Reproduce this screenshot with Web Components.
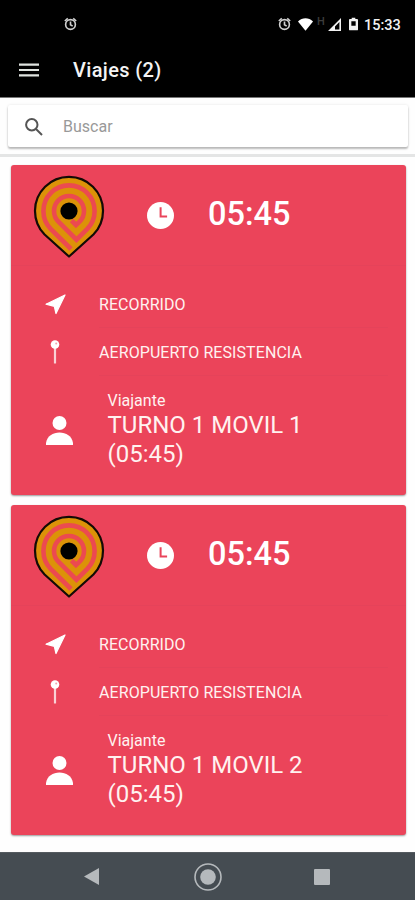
<!DOCTYPE html>
<html lang="es">
<head>
<meta charset="utf-8">
<title>Viajes</title>
<style>
  body {
    margin: 0;
    background: #fefefe;
    font-family: Roboto, "Liberation Sans", sans-serif;
    overflow: hidden;
  }
</style>
</head>
<body>
<viajes-app></viajes-app>

<script>
// Creates a template from a html string.
const createTemplate = (html) => {
  const template = document.createElement('template')
  template.innerHTML = html
  return template
}

// Base class, clones the template of the subclass into the shadow root.
class BaseElement extends HTMLElement {
  constructor() {
    super()
    this.attachShadow({ mode: 'open' }).appendChild(this.constructor.template.content.cloneNode(true))
  }
}

const icons = {
  alarm: '<svg viewBox="0 0 24 24"><g fill="none" stroke="currentColor" stroke-width="3"><circle cx="12" cy="13" r="9"/><path d="M12 7.500v6l4 2.500M1.500 6.500l5.500-5M22.500 6.500l-5.500-5"/></g></svg>',
  wifi: '<svg viewBox="0 0 24 20"><path fill="currentColor" d="M12 20 0 5C7-1.500 17-1.500 24 5z"/></svg>',
  signal: '<svg viewBox="0 0 13 13"><path fill="currentColor" fill-rule="evenodd" d="M13 0v13H0zM11.400 4 7 8.400v3h4.400z"/></svg>',
  battery: '<svg viewBox="0 0 10 14"><path fill="currentColor" fill-rule="evenodd" d="M3 0h4v1.500h2q1 0 1 1V13q0 1-1 1H1q-1 0-1-1V2.500q0-1 1-1h2zM2.600 4v5h4.800V4z"/></svg>',
  menu: '<svg viewBox="0 0 20 14"><path stroke="currentColor" stroke-width="2.200" d="M0 1.600h20M0 7h20M0 12.400h20"/></svg>',
  search: '<svg viewBox="0 0 18 18"><g fill="none" stroke="currentColor" stroke-width="2"><circle cx="6.800" cy="6.800" r="5.700"/><path d="m11 11 6 6"/></g></svg>',
  clock: '<svg viewBox="0 0 27 27"><circle cx="13.500" cy="13.500" r="13.500" fill="currentColor"/><path d="M13.600 5.200v9.300h6.500" fill="none" stroke="#e9445b" stroke-width="2"/></svg>',
  arrow: '<svg viewBox="0 0 21 21"><path fill="currentColor" stroke="currentColor" stroke-width="1.200" stroke-linejoin="round" d="M20 1 11 19.500 9.300 12.300 1 10.200z"/></svg>',
  pin: '<svg viewBox="0 0 10 24"><path d="M5 7v16.500" stroke="currentColor" stroke-width="2.200" opacity=".75"/><circle cx="5" cy="4.500" r="4.300" fill="currentColor"/><circle cx="6.200" cy="3.500" r="1" fill="#e9445b" opacity=".5"/></svg>',
  person: '<svg viewBox="0 0 27 29"><g fill="currentColor"><circle cx="13.500" cy="7" r="7"/><path d="M0 29v-2C1 20 7 16.500 13.500 16.500S26 20 27 27v2z"/></g></svg>',
  back: '<svg viewBox="0 0 15 17"><path fill="currentColor" d="M15 0v17L0 8.500z"/></svg>',
  home: '<svg viewBox="0 0 28 28"><circle cx="14" cy="14" r="13" fill="none" stroke="currentColor" stroke-width="1.600"/><circle cx="14" cy="14" r="7.800" fill="currentColor"/></svg>',
  recent: '<svg viewBox="0 0 16 16"><rect width="16" height="16" rx="1" fill="currentColor"/></svg>',
  logo: `<svg viewBox="-36 -36 72 84">
    <path d="M0 45.500-24.400 23.500A34 34 0 1 1 24.400 23.500z" fill="#dc9208" stroke="#130b05" stroke-width="2.200" stroke-linejoin="round"/>
    <path d="M2 38-18.100 18.100A25.600 25.600 0 1 1 18.100 18.100L7.500 28.700-10.600 10.600A15 15 0 1 1 10.600 10.600L7 14 2.500 9.500" fill="none" stroke="#ec4a50" stroke-width="4.600"/>
    <circle r="8.600" fill="#000"/>
  </svg>`
}

// <app-icon name="..."> the size comes from the width/height of the host.
class AppIcon extends BaseElement {
  static template = createTemplate(`
    <style>
      :host { display: block; flex: none; }
      svg { display: block; width: 100%; height: 100%; }
    </style>
    <div id="icon" style="height: 100%"></div>
  `)

  connectedCallback() {
    this.shadowRoot.querySelector('#icon').innerHTML = icons[this.getAttribute('name')]
  }
}
customElements.define('app-icon', AppIcon)

class StatusBar extends BaseElement {
  static template = createTemplate(`
    <style>
      :host {
        display: flex;
        align-items: center;
        height: 48px;
        padding: 0 15px 0 64px;
        box-sizing: border-box;
        background: #000;
        color: #f2f2f2;
      }
      .alarm { width: 13px; height: 14px; color: #d0d0d0; }
      .right { display: flex; align-items: center; margin-left: auto; }
      .wifi { width: 15px; height: 13px; margin-left: 7px; color: #fff; }
      .net { font-size: 11px; line-height: 10px; font-weight: 500; color: #3c3c3c; margin: -5px 3px 0 4px; width: 8px; }
      .signal { width: 13px; height: 13px; margin-top: 1px; }
      .battery { width: 9px; height: 14px; margin: 0 6px 0 8px; }
      .time { font-size: 14.500px; font-weight: 500; width: 36px; margin-top: 2px; white-space: nowrap; }
    </style>
    <app-icon class="alarm" name="alarm"></app-icon>
    <div class="right">
      <app-icon class="alarm" name="alarm"></app-icon>
      <app-icon class="wifi" name="wifi"></app-icon>
      <span class="net">H</span>
      <app-icon class="signal" name="signal"></app-icon>
      <app-icon class="battery" name="battery"></app-icon>
      <span class="time"><slot></slot></span>
    </div>
  `)
}
customElements.define('status-bar', StatusBar)

class AppHeader extends BaseElement {
  static template = createTemplate(`
    <style>
      :host {
        display: flex;
        align-items: center;
        height: 50px;
        padding: 0 19px 6px;
        box-sizing: border-box;
        background: #000;
        border-bottom: 1px solid #777;
        color: #f4f4f4;
      }
      app-icon { width: 20px; height: 14px; color: #dfe3df; }
      h1 { margin: 0 0 0 34px; font-size: 20px; font-weight: 500; line-height: 24px; letter-spacing: .34px; }
    </style>
    <app-icon name="menu"></app-icon>
    <h1><slot></slot></h1>
  `)
}
customElements.define('app-header', AppHeader)

class SearchBar extends BaseElement {
  static template = createTemplate(`
    <style>
      :host {
        display: block;
        height: 59px;
        padding: 7px 7px 0 8px;
        box-sizing: border-box;
        border-bottom: 3px solid #e4e5e5;
      }
      .box {
        display: flex;
        align-items: center;
        height: 42px;
        padding-left: 17px;
        border-radius: 2px;
        background: #fff;
        box-shadow: 0 2px 2px rgba(0, 0, 0, .25), 0 0 3px rgba(0, 0, 0, .1);
      }
      app-icon { width: 18px; height: 18px; margin-top: 1px; color: #555; }
      span { margin-left: 20px; font-size: 16px; color: #999; }
    </style>
    <div class="box">
      <app-icon name="search"></app-icon>
      <span><slot></slot></span>
    </div>
  `)
}
customElements.define('search-bar', SearchBar)

// Red card for one trip.
class TripCard extends BaseElement {
  static template = createTemplate(`
    <style>
      :host {
        display: block;
        height: 330px;
        border-radius: 3px;
        background: #eb445a;
        color: #fff2f0;
        box-shadow: 0 1px 2px rgba(0, 0, 0, .4);
      }
      .head {
        display: flex;
        align-items: center;
        height: 100px;
        padding-left: 22px;
        border-bottom: 1px solid #e5435a;
        margin-bottom: 14px;
      }
      .logo { width: 72px; height: 84px; margin-top: 3px; }
      .clock { width: 27px; height: 27px; margin-left: 42px; color: #fff; }
      .time { margin: -2px 0 0 34px; font-size: 32.500px; line-height: 38px; font-weight: 500; color: #fff; }
      .row { display: flex; align-items: center; height: 48px; }
      .row .cell { width: 88px; flex: none; }
      .row .label {
        flex: 1;
        height: 48px;
        line-height: 49px;
        margin-right: 18px;
        box-sizing: border-box;
        border-bottom: 1px solid #e5435a;
        font-size: 16px;
        letter-spacing: .08px;
      }
      .arrow { width: 21px; height: 21px; margin-left: 34px; color: #fff; }
      .pin { width: 10px; height: 24px; margin-left: 39px; color: #fff; }
      .traveller { display: flex; align-items: center; padding: 15px 0 0 35px; }
      .person { width: 27px; height: 29px; color: #fff; }
      .info { margin-left: 34.500px; width: 230px; }
      .small { font-size: 16px; line-height: 19px; }
      .name { font-size: 24px; line-height: 29px; padding-top: 1px; }
    </style>
    <div class="head">
      <app-icon class="logo" name="logo"></app-icon>
      <app-icon class="clock" name="clock"></app-icon>
      <span class="time"><slot name="time"></slot></span>
    </div>
    <div class="row">
      <div class="cell"><app-icon class="arrow" name="arrow"></app-icon></div>
      <div class="label">RECORRIDO</div>
    </div>
    <div class="row">
      <div class="cell"><app-icon class="pin" name="pin"></app-icon></div>
      <div class="label"><slot name="place"></slot></div>
    </div>
    <div class="traveller">
      <app-icon class="person" name="person"></app-icon>
      <div class="info">
        <div class="small">Viajante</div>
        <div class="name"><slot></slot></div>
      </div>
    </div>
  `)
}
customElements.define('trip-card', TripCard)

class NavBar extends BaseElement {
  static template = createTemplate(`
    <style>
      :host {
        display: flex;
        align-items: center;
        height: 48px;
        padding-left: 84px;
        box-sizing: border-box;
        background: #454c52;
        border-top: 1px solid #555b60;
        color: #b5b9bc;
      }
      .back { width: 15px; height: 17px; }
      .home { width: 28px; height: 28px; margin-left: 95px; }
      .recent { width: 16px; height: 16px; margin-left: 92px; }
    </style>
    <app-icon class="back" name="back"></app-icon>
    <app-icon class="home" name="home"></app-icon>
    <app-icon class="recent" name="recent"></app-icon>
  `)
}
customElements.define('nav-bar', NavBar)

class ViajesApp extends BaseElement {
  static template = createTemplate(`
    <style>
      :host { display: flex; flex-direction: column; height: 900px; }
      main {
        flex: 1;
        display: flex;
        flex-direction: column;
        gap: 10px;
        padding: 8px 9px 0 11px;
      }
    </style>
    <status-bar>15:33</status-bar>
    <app-header>Viajes (2)</app-header>
    <search-bar>Buscar</search-bar>
    <main>
      <trip-card>
        <span slot="time">05:45</span>
        <span slot="place">AEROPUERTO RESISTENCIA</span>
        TURNO 1 MOVIL 1<br>(05:45)
      </trip-card>
      <trip-card>
        <span slot="time">05:45</span>
        <span slot="place">AEROPUERTO RESISTENCIA</span>
        TURNO 1 MOVIL 2<br>(05:45)
      </trip-card>
    </main>
    <nav-bar></nav-bar>
  `)
}
customElements.define('viajes-app', ViajesApp)
</script>
</body>
</html>
